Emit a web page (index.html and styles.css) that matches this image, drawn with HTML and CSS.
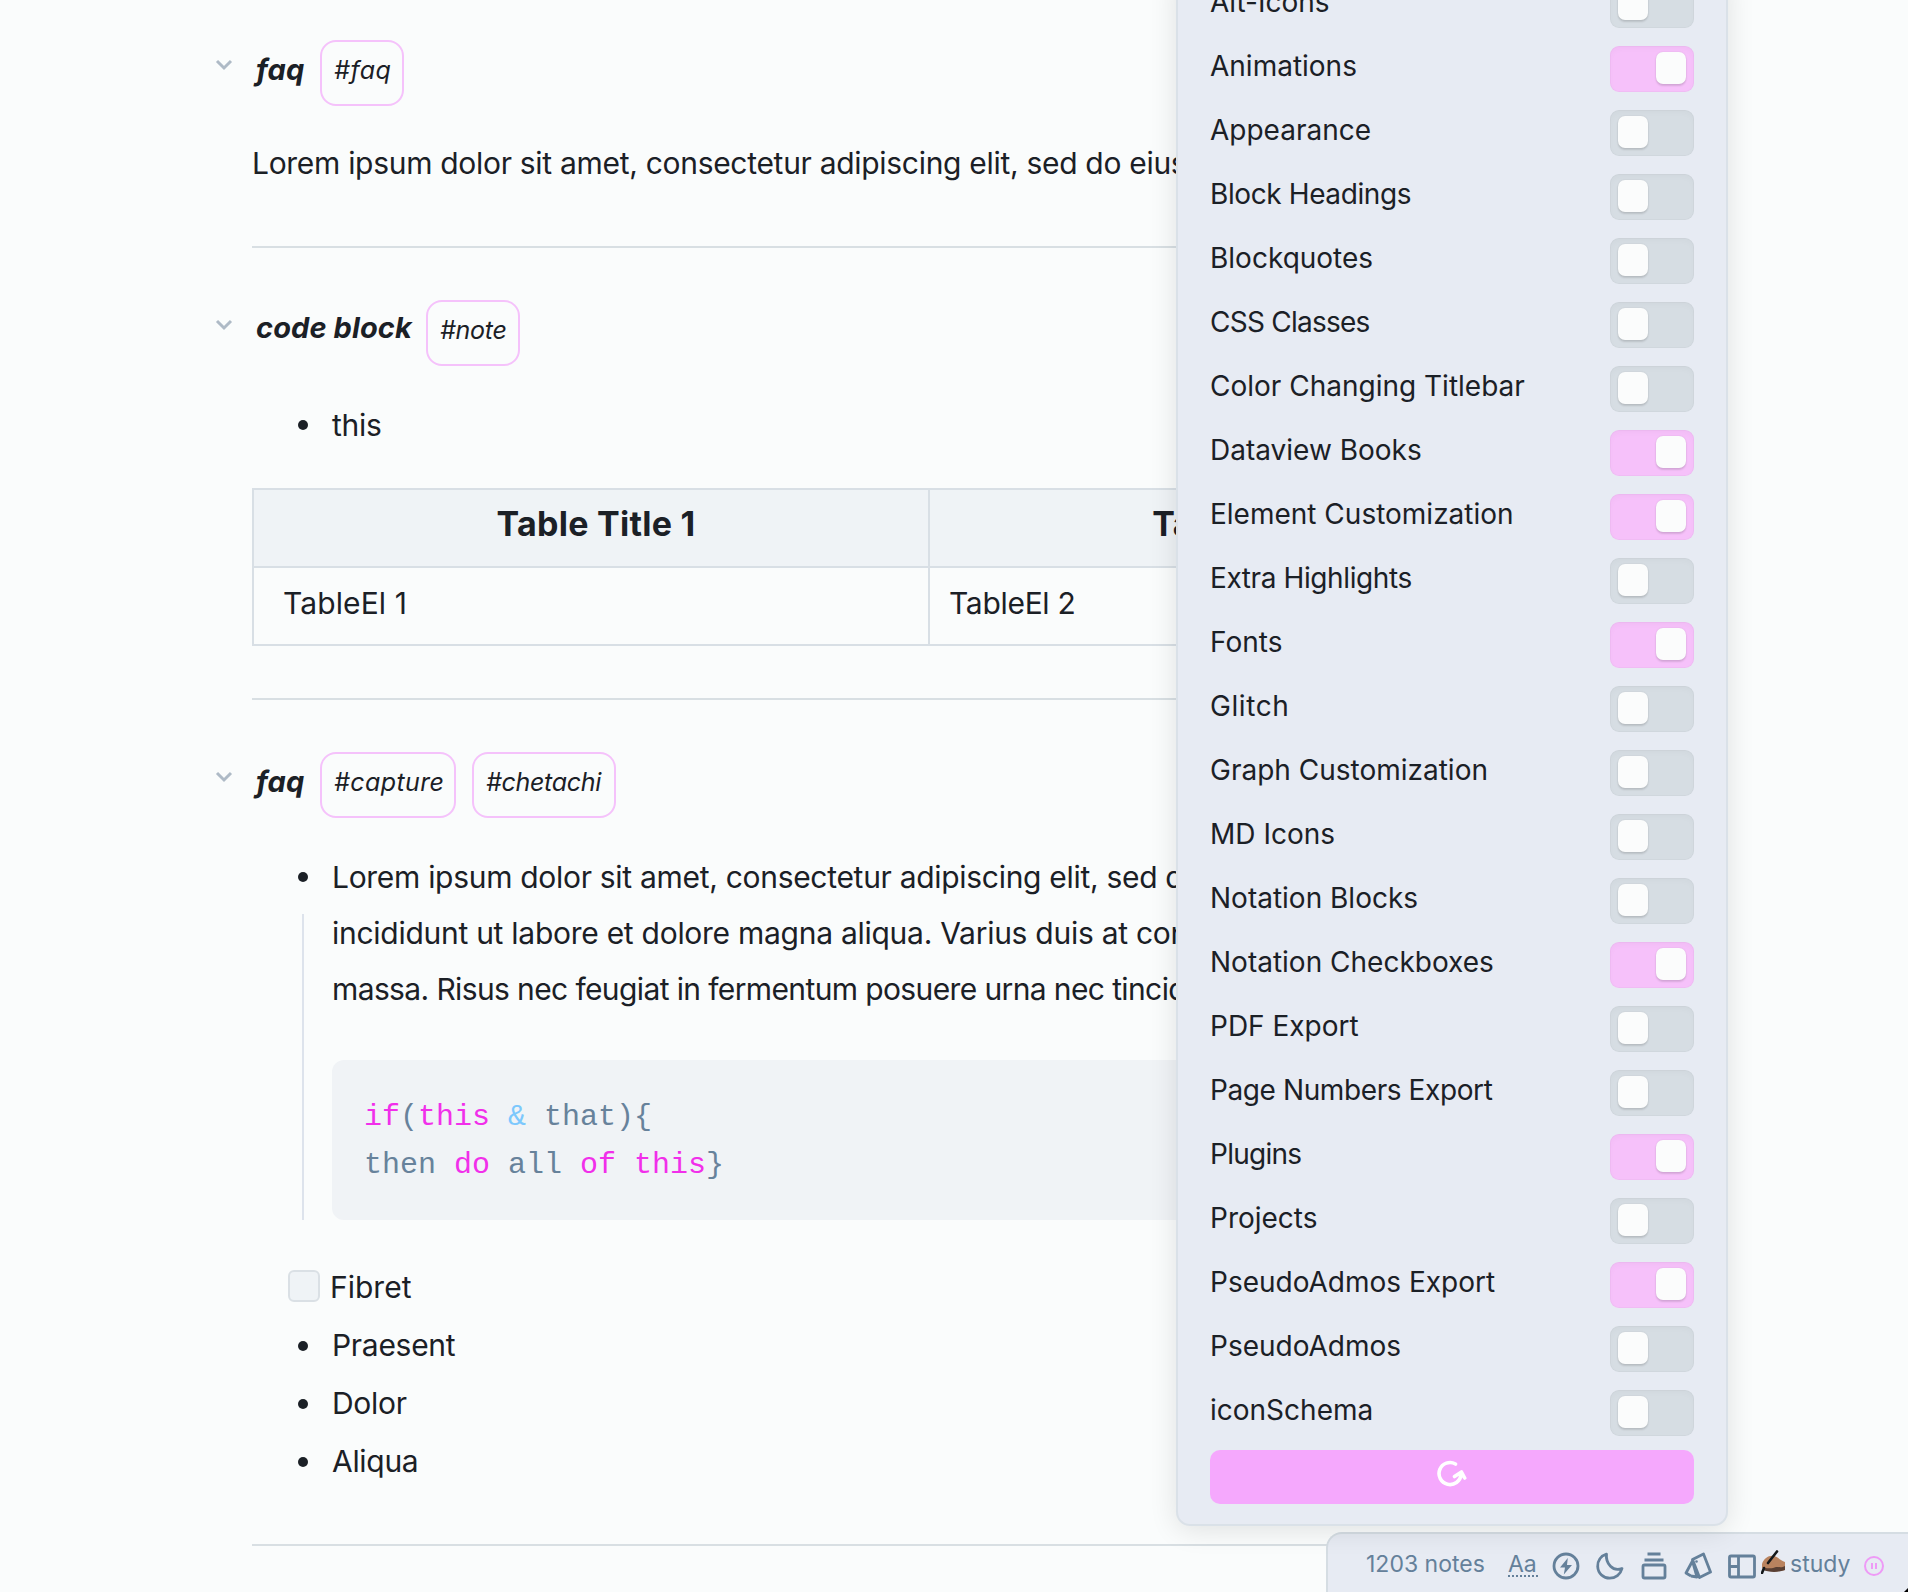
FILE: index.html
```html
<!DOCTYPE html>
<html lang="en">
<head>
<meta charset="utf-8">
<title>Notes</title>
<link rel="stylesheet" href="styles.css">
</head>
<body>
<main class="note">
  <section class="block">
    <h2 class="heading"><svg class="chevron" viewBox="0 0 16 10"><path d="M1 1l7 7 7-7"/></svg><span class="title title-faq">faq</span><span class="tag tag-faq">#faq</span></h2>
    <p class="para">Lorem ipsum dolor sit amet, consectetur adipiscing elit, sed do eiusmod</p>
  </section>
  <hr>
  <section class="block">
    <h2 class="heading"><svg class="chevron" viewBox="0 0 16 10"><path d="M1 1l7 7 7-7"/></svg><span class="title title-code">code block</span><span class="tag tag-note">#note</span></h2>
    <ul class="list list-first"><li>this</li></ul>
    <table>
      <tr><th>Table Title 1</th><th>Table Title 2</th></tr>
      <tr><td>TableEl 1</td><td>TableEl 2</td></tr>
    </table>
  </section>
  <hr class="hr-table">
  <section class="block">
    <h2 class="heading"><svg class="chevron" viewBox="0 0 16 10"><path d="M1 1l7 7 7-7"/></svg><span class="title title-faq">faq</span><span class="tag tag-capture">#capture</span><span class="tag tag-chetachi">#chetachi</span></h2>
    <ul class="list list-first">
      <li class="nested"><span class="line l1">Lorem ipsum dolor sit amet, consectetur adipiscing elit, sed do</span><span class="line l2">incididunt ut labore et dolore magna aliqua. Varius duis at conse</span><span class="line l3">massa. Risus nec feugiat in fermentum posuere urna nec tincidunt</span>
        <pre><b>if</b>(<b>this</b> <i>&amp;</i> that){
then <b>do</b> all <b>of</b> <b>this</b>}</pre>
      </li>
    </ul>
    <ul class="list list-tasks">
      <li class="task"><span class="checkbox"></span>Fibret</li>
      <li>Praesent</li>
      <li>Dolor</li>
      <li>Aliqua</li>
    </ul>
  </section>
  <hr>
</main>

<footer class="status">
  <span class="count">1203 notes</span>
  <span class="aa">Aa</span>
  <svg class="ico ico-bolt" viewBox="0 0 28 28"><circle cx="14" cy="14" r="12"/><path class="fill" d="M15.800 6L8 15.500h5L11.800 22.500 20 13h-5z"/></svg>
  <svg class="ico ico-moon" viewBox="0 0 28 28"><path d="M10.500 2.200C4.500 4 1.500 9 1.700 14.500c.3 7 5.800 11.700 12 11.700 5.800 0 10.800-3.700 12.300-9.700-4 1.500-8.500.8-11.500-2.200-3.200-3.200-4.500-7.600-4-12.100z"/></svg>
  <svg class="ico ico-stack" viewBox="0 0 28 28"><path d="M7.500 2h13M4.500 8h19"/><rect x="3" y="13" width="22" height="13" rx="1.500"/></svg>
  <svg class="ico ico-cards" viewBox="0 0 28 28"><path d="M8.500 7.500L19.500 2l7 18-11 5.500zM8.500 9l-6.500 12 5 3M8.500 9l4.500 16-6-1"/><circle class="fill" cx="12.500" cy="9.500" r="1.300"/></svg>
  <svg class="ico ico-layout" viewBox="0 0 28 28"><rect x="1.500" y="4" width="25" height="21" rx="1.500"/><path d="M10.500 4v21M1.500 14.500h9"/></svg>
  <span class="emoji"><svg viewBox="0 0 25 24"><path d="M1 14C3 8 8 5 13 6c4 1 7 5 11 6v8c-5 1-8 2-13 1-4 0-8-1-10-3z" fill="#b9835f"/><path d="M2 20c5 2 14 3 22 0v-4c-3 2-6 1-9 1-4 2-8 1-11 1z" fill="#5a4034"/><path d="M16 1.500L7 13M3 18l-2 5" fill="none" stroke="#14181b" stroke-width="2.600" stroke-linecap="round"/></svg></span>
  <span class="study">study</span>
  <svg class="pause" viewBox="0 0 20 20"><circle cx="10" cy="10" r="9"/><path d="M8 7v6M12 7v6"/></svg>
  <svg class="corner" viewBox="0 0 4 4"><path d="M4 0v4H0z"/></svg>
</footer>

<aside class="panel">
  <div class="row"><span>Alt-Icons</span><i class="toggle"></i></div>
  <div class="row"><span>Animations</span><i class="toggle on"></i></div>
  <div class="row"><span>Appearance</span><i class="toggle"></i></div>
  <div class="row"><span class="tight">Block Headings</span><i class="toggle"></i></div>
  <div class="row"><span>Blockquotes</span><i class="toggle"></i></div>
  <div class="row"><span class="tighter">CSS Classes</span><i class="toggle"></i></div>
  <div class="row"><span>Color Changing Titlebar</span><i class="toggle"></i></div>
  <div class="row"><span>Dataview Books</span><i class="toggle on"></i></div>
  <div class="row"><span>Element Customization</span><i class="toggle on"></i></div>
  <div class="row"><span class="tight">Extra Highlights</span><i class="toggle"></i></div>
  <div class="row"><span>Fonts</span><i class="toggle on"></i></div>
  <div class="row"><span class="wide">Glitch</span><i class="toggle"></i></div>
  <div class="row"><span>Graph Customization</span><i class="toggle"></i></div>
  <div class="row"><span>MD Icons</span><i class="toggle"></i></div>
  <div class="row"><span>Notation Blocks</span><i class="toggle"></i></div>
  <div class="row"><span>Notation Checkboxes</span><i class="toggle on"></i></div>
  <div class="row"><span>PDF Export</span><i class="toggle"></i></div>
  <div class="row"><span class="tight">Page Numbers Export</span><i class="toggle"></i></div>
  <div class="row"><span class="tighter">Plugins</span><i class="toggle on"></i></div>
  <div class="row"><span>Projects</span><i class="toggle"></i></div>
  <div class="row"><span>PseudoAdmos Export</span><i class="toggle on"></i></div>
  <div class="row"><span>PseudoAdmos</span><i class="toggle"></i></div>
  <div class="row"><span>iconSchema</span><i class="toggle"></i></div>
  <button class="reload"><svg viewBox="0 0 30 28"><path d="M18.500 5A11 11 0 1 0 24 15.500M17.500 17.500L24.500 13l3.200 6"/></svg></button>
</aside>
</body>
</html>
```
FILE: styles.css
```css
* { box-sizing: border-box; }
body {
  margin: 0;
  height: 1592px;
  position: relative;
  overflow: hidden;
  background: #fafcfc;
  color: #1b2026;
  font: 30px/56px Inter, sans-serif;
  letter-spacing: -0.3px;
}
.note { padding: 40px 252px 0; white-space: nowrap; }
hr { height: 2px; margin: 55px 0 52px; border: 0; background: #d8dfe3; }
.hr-table { margin-top: 52px; }

.heading {
  display: flex;
  height: 66px;
  margin: 0 0 0 -36px;
  font: italic 30px/66px Inter, cursive;
  font-feature-settings: "cv11";
}
.chevron {
  width: 16px;
  height: 10px;
  margin: 20px 24px 0 0;
  overflow: visible;
  fill: none;
  stroke: #aebac6;
  stroke-width: 3;
}
.title { font-weight: 700; font-size: 29px; line-height: 55px; }
.title-faq { width: 64px; line-height: 59px; letter-spacing: 0.2px; }
.title-code { width: 170px; letter-spacing: 0.1px; }
.tag {
  height: 66px;
  padding-left: 12px;
  margin-right: 16px;
  border: 2px solid #f5c2fb;
  border-radius: 16px;
  font-size: 25px;
  line-height: 57px;
}
.tag-faq { width: 84px; letter-spacing: 0.6px; }
.tag-note { width: 94px; }
.tag-capture { width: 136px; letter-spacing: 0.4px; }
.tag-chetachi { width: 144px; }

.para { margin: 29px 0 0; }

.list { margin: 0; padding: 0 0 0 80px; list-style: none; }
.list-first { margin-top: 31px; }
.list li { position: relative; }
.list li::before {
  content: "";
  position: absolute;
  left: -34px;
  top: 23px;
  width: 10px;
  height: 10px;
  border-radius: 50%;
  background: #1b2026;
}
.list .nested::after {
  content: "";
  position: absolute;
  left: -30px;
  top: 65px;
  bottom: 0;
  width: 2px;
  background: #dde3ec;
}
.line { display: block; }
.l2 { letter-spacing: -0.27px; }
.l3 { letter-spacing: -0.62px; }
pre {
  height: 160px;
  margin: 43px 0 0;
  padding: 33px 32px;
  border-radius: 12px;
  background: #f0f3f6;
  color: #67829b;
  font: 30px/48px "Liberation Mono", monospace;
  letter-spacing: 0;
}
pre b { color: #f12fea; font-weight: 400; }
pre i { color: #7cc8fd; font-style: normal; }
.list-tasks { padding-top: 1px; margin-top: 37px; margin-bottom: -1px; line-height: 58px; }
.list-tasks li::before { top: 25px; }
.list .task { margin-left: -44px; display: flex; gap: 10px; letter-spacing: 0; }
.list .task::before { display: none; }
.checkbox {
  width: 32px;
  height: 32px;
  margin-top: 12px;
  border: 2px solid #dae0e5;
  border-radius: 6px;
  background: #eff3f6;
}

table { width: 1330px; margin-top: 35px; border-collapse: collapse; table-layout: fixed; }
th, td { height: 78px; padding: 0 19px; border: 2px solid #d8dfe5; text-align: left; }
th { padding-bottom: 8px; background: #eff3f6; font-size: 34px; font-weight: 700; letter-spacing: 0.25px; text-align: center; }
td { padding-bottom: 6px; }
th:first-child, td:first-child { width: 676px; padding-left: 29px; }
td:first-child { letter-spacing: 0.1px; }

.panel {
  position: absolute;
  left: 1176px;
  bottom: 66px;
  width: 552px;
  padding: 0 32px 20px;
  border: 2px solid #dae1e8;
  border-radius: 14px;
  background: #e7ebf3;
  box-shadow: 0 4px 28px rgba(0, 0, 0, .11);
  font-size: 28px;
  line-height: 34px;
  letter-spacing: 0;
}
.row { display: flex; height: 64px; align-items: center; justify-content: space-between; }
.row span { padding-bottom: 6px; }
.tight { letter-spacing: -0.4px; }
.tighter { letter-spacing: -0.75px; }
.wide { letter-spacing: 0.6px; }
.toggle {
  width: 84px;
  height: 46px;
  padding: 6px 8px;
  border-radius: 9px;
  background: #d6dde3;
  box-shadow: inset 0 0 0 1px rgba(0, 0, 0, .025), inset 0 3px 6px rgba(0, 0, 0, .025);
}
.toggle::before {
  content: "";
  display: block;
  width: 30px;
  height: 32px;
  border-radius: 7px;
  background: #fbfcfc;
  box-shadow: 0 2px 2px rgba(0, 0, 0, .12), 0 0 2px rgba(0, 0, 0, .1);
}
.toggle.on { background: #f6c1fa; }
.toggle.on::before { margin-left: 38px; }
.reload {
  display: block;
  width: 484px;
  height: 54px;
  margin-top: 5px;
  padding: 0 0 9px;
  border: 0;
  border-radius: 10px;
  background: #f5a8fd;
}
.reload svg {
  display: block;
  width: 30px;
  height: 28px;
  margin: 0 auto;
  fill: none;
  stroke: #fff;
  stroke-width: 3.6;
  stroke-linecap: round;
  stroke-linejoin: round;
}

.status {
  position: absolute;
  left: 1326px;
  right: 0;
  bottom: 0;
  height: 60px;
  display: flex;
  padding: 4px 0 0 38px;
  border: 2px solid #d5dde3;
  border-width: 2px 0 0 2px;
  border-radius: 16px 0 0;
  background: #e7ebf3;
  color: #64809a;
  font-size: 23px;
  line-height: 52px;
  letter-spacing: 0;
}
.count { width: 142px; }
.aa {
  height: 39px;
  width: 30px;
  margin-right: 14px;
  background: repeating-linear-gradient(90deg, #64809a 0 2px, transparent 2px 4px) bottom / 100% 2px no-repeat;
}
.ico {
  width: 28px;
  height: 28px;
  margin: 14px 16px 0 0;
  fill: none;
  stroke: #64809a;
  stroke-width: 2.8;
  stroke-linejoin: round;
}
.ico .fill { fill: #64809a; stroke: none; }
.ico-layout { margin-right: 5px; }
.emoji svg { display: block; width: 25px; height: 24px; margin: 12px 4px 0 0; }
.study { width: 74px; }
.pause { width: 20px; height: 20px; margin-top: 18px; fill: none; stroke: #ee9af6; stroke-width: 2; }
.corner { position: absolute; right: 0; bottom: 0; width: 4px; height: 4px; }
```
